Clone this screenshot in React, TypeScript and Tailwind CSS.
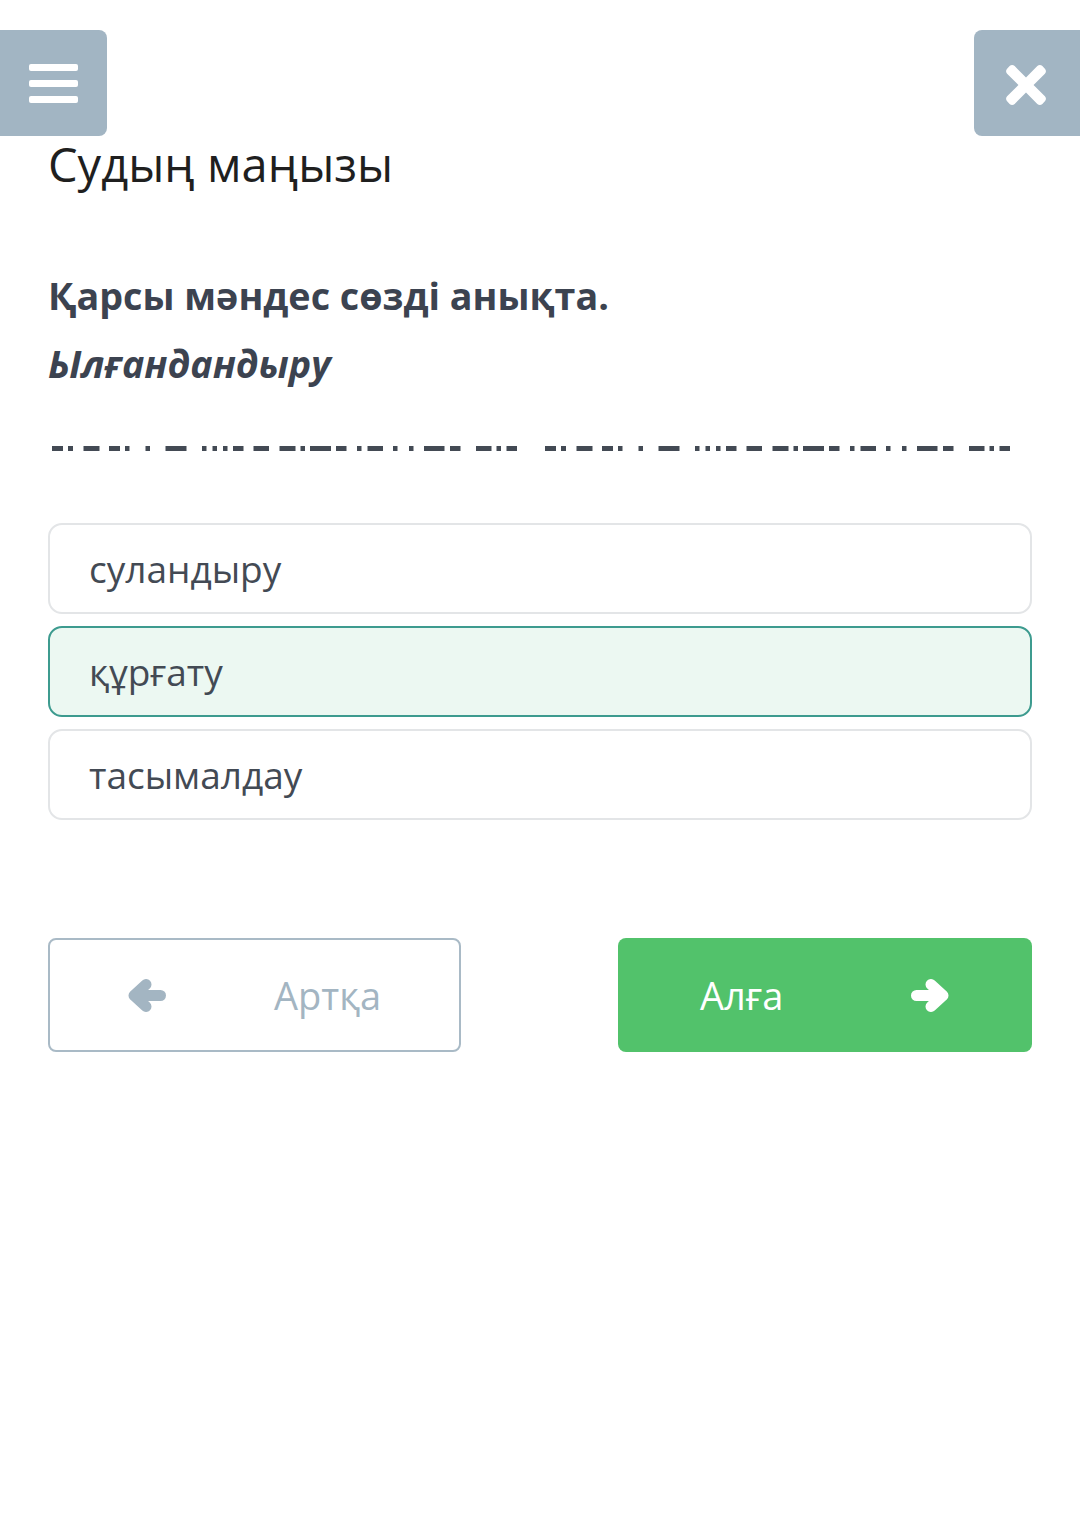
import { FaTimes } from 'react-icons/fa';

// redacted text pattern: [x, width] relative to start of one group
const dashPattern: [number, number][] = [
  [0, 11], [16, 5], [31.5, 16], [57, 11], [73, 4.5], [93.5, 4.5], [113.5, 21],
  [150, 4.5], [160.5, 4.5], [171, 4.5], [181, 10.5], [201.5, 15.5], [227.5, 16],
  [248.5, 4.5], [258, 21], [284, 10.5], [305, 4.5], [315.5, 15.5], [341, 4.5],
  [357, 4.5], [372, 20.5], [398, 10.5], [424, 15.5], [444.5, 4.5], [454.5, 10.5],
];

const options = [
  { label: 'суландыру', selected: false },
  { label: 'құрғату', selected: true },
  { label: 'тасымалдау', selected: false },
];

function RedactedLine() {
  return (
    <svg width="984" height="5" viewBox="0 0 984 5" className="block">
      {[0, 493].map((offset) =>
        dashPattern.map(([x, w], i) => (
          <rect key={`${offset}-${i}`} x={x + offset + 4} y={0} width={w} height={5} fill="#434a54" />
        ))
      )}
    </svg>
  );
}

function Arrow({ dir, className }: { dir: 'left' | 'right'; className?: string }) {
  return (
    <svg width="38" height="33" viewBox="0 0 38 33" className={className}>
      <g
        transform={dir === 'right' ? 'translate(38 0) scale(-1 1)' : undefined}
        fill="none"
        stroke="currentColor"
        strokeWidth="11"
        strokeLinecap="round"
        strokeLinejoin="round"
      >
        <polyline points="18,5.5 6,16.5 18,27.5" />
        <line x1="7" y1="16.5" x2="32.5" y2="16.5" />
      </g>
    </svg>
  );
}

export default function App() {
  return (
    <div className="min-h-[1536px] w-[1080px] bg-white font-['Open_Sans',sans-serif]">
      <div className="flex justify-between pt-[30px]">
        <button className="flex h-[106px] w-[107px] flex-col items-center justify-center gap-[9px] rounded-r-[8px] bg-[#a2b5c3]">
          <span className="block h-[7px] w-[49px] rounded-[2px] bg-white" />
          <span className="block h-[7px] w-[49px] rounded-[2px] bg-white" />
          <span className="block h-[7px] w-[49px] rounded-[2px] bg-white" />
        </button>
        <button className="flex h-[106px] w-[106px] items-center justify-center rounded-l-[8px] bg-[#a2b5c3] pr-[2px] pt-[3px]">
          <FaTimes size={58} className="text-white" />
        </button>
      </div>

      <div className="px-[48px]">
        <h1 className="text-[47px] leading-[56px] font-normal text-[#1f1f1f]">Судың маңызы</h1>

        <p className="mt-[82px] text-[37.7px] leading-[44px] font-bold text-[#3c4350]">Қарсы мәндес сөзді анықта.</p>
        <p className="mt-[24px] text-[37.7px] leading-[44px] font-bold italic text-[#3c4350]">Ылғандандыру</p>

        <div className="mt-[60px]">
          <RedactedLine />
        </div>

        <div className="mt-[72px] flex flex-col gap-[12px]">
          {options.map((o) => (
            <div
              key={o.label}
              className={`flex h-[91px] items-center rounded-[14px] border-2 px-[39px] text-[37px] leading-[44px] text-[#434a54] ${
                o.selected ? 'border-[#3d9b8f] bg-[#ecf8f2]' : 'border-[#e3e5e7] bg-white'
              }`}
            >
              {o.label}
            </div>
          ))}
        </div>

        <div className="mt-[118px] flex justify-between">
          <button className="flex h-[114px] w-[413px] items-center justify-between rounded-[8px] border-2 border-[#a9bac6] bg-white pl-[78px] pr-[78px] text-[38px] text-[#a3b5c2]">
            <Arrow dir="left" />
            <span>Артқа</span>
          </button>
          <button className="flex h-[114px] w-[414px] items-center justify-between rounded-[8px] bg-[#52c26b] pl-[82px] pr-[83px] text-[38px] text-white">
            <span>Алға</span>
            <Arrow dir="right" />
          </button>
        </div>
      </div>
    </div>
  );
}
